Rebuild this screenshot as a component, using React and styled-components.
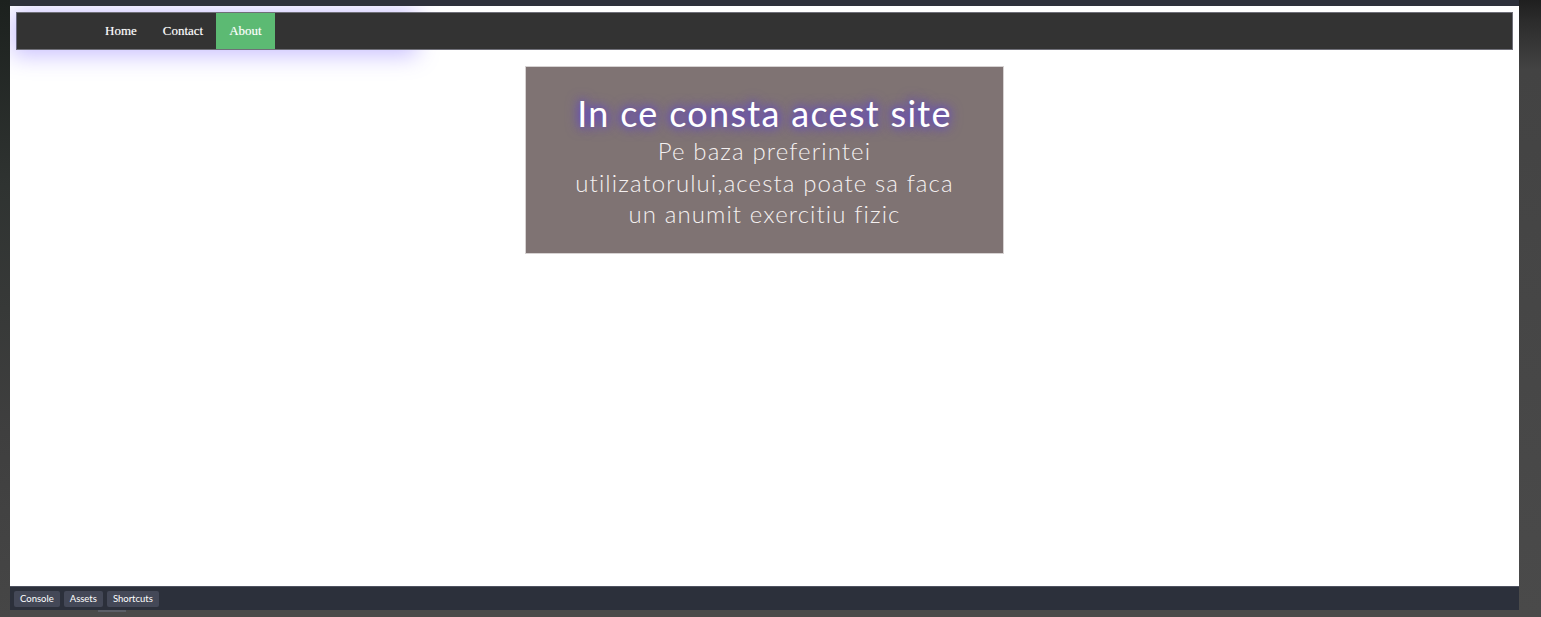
import React from 'react';
import styled, { createGlobalStyle } from 'styled-components';

const GlobalStyle = createGlobalStyle`
  html, body {
    margin: 0;
    padding: 0;
    background: #4a4a4a;
    overflow: hidden;
  }
`;

const Screen = styled.div`
  width: 1541px;
  height: 617px;
  display: grid;
  grid-template-columns: 10px 1509px 22px;
  grid-template-rows: 6px 580px 24px 7px;
  background: #4a4a4a;
`;

const LeftEdge = styled.div`
  grid-column: 1;
  grid-row: 1 / 5;
  background: linear-gradient(180deg, #1c211e 0%, #2f3331 30%, #3f3f3f 70%, #464646 100%);
`;

const RightEdge = styled.div`
  grid-column: 3;
  grid-row: 1 / 5;
  background: linear-gradient(180deg, #1f1f1f 0%, #2b2b2b 20px, #434343 70px, #4a4a4a 100%);
`;

const TopBar = styled.div`
  grid-column: 2;
  grid-row: 1;
  background: #2e313b;
`;

const Preview = styled.div`
  grid-column: 2;
  grid-row: 2;
  position: relative;
  z-index: 0;
  background: #ffffff;
  padding: 6px 6px 0;
  overflow: hidden;
`;

/* purple glow behind the left part of the bar */
const Nav = styled.nav`
  position: relative;
  height: 36px;
  background: #333333;
  border: 1px solid #6f6f78;
  border-left-color: #6a6a80;

  &::before {
    content: '';
    position: absolute;
    left: 0;
    top: 0;
    width: 395px;
    height: 36px;
    z-index: -1;
    box-shadow: 0 2px 22px 5px rgba(140, 120, 255, 0.45);
  }
`;

const NavList = styled.ul`
  margin: 0;
  padding: 0 0 0 75px;
  height: 36px;
  list-style: none;
  display: flex;
`;

const NavLink = styled.a`
  display: block;
  height: 36px;
  line-height: 36px;
  padding: 0 13px;
  font-family: "Liberation Serif", "Times New Roman", serif;
  font-size: 13px;
  color: #ffffff;
  text-decoration: none;
  background: ${(p) => (p.$active ? '#5cba73' : 'transparent')};
  text-shadow: 0 0 1px rgba(255, 255, 255, 0.4);
`;

const Content = styled.main`
  display: flex;
  justify-content: center;
  padding-top: 16px;
`;

const Card = styled.section`
  width: 479px;
  height: 188px;
  box-sizing: border-box;
  background: #7f7373;
  border: 1px solid #d6d2d2;
  display: flex;
  flex-direction: column;
  align-items: center;
  padding-top: 24px;
  text-align: center;
  color: #ffffff;
  font-family: "Lato", "Open Sans", sans-serif;
`;

const Title = styled.h1`
  margin: 0;
  font-size: 36px;
  font-weight: 400;
  line-height: 44px;
  letter-spacing: 1.3px;
  text-shadow: 0 0 8px #5b3fc8, 0 0 14px #6a4bd8;
`;

const Text = styled.p`
  margin: 0;
  width: 400px;
  font-size: 24px;
  font-weight: 300;
  line-height: 31.5px;
  color: #f4f0f0;
  letter-spacing: 1.1px;
`;

const BottomBar = styled.div`
  grid-column: 2;
  grid-row: 3;
  background: #2c303b;
  border-top: 1px solid #4e5260;
  display: flex;
  align-items: center;
  gap: 4px;
  padding-left: 4px;
  position: relative;
`;

const ToolButton = styled.button`
  height: 16px;
  padding: 0 6px;
  border: 0;
  border-radius: 2px;
  background: #444857;
  color: #ffffff;
  font-family: "Lato", "Liberation Sans", sans-serif;
  font-size: 9.5px;
  line-height: 16px;
`;

const Handle = styled.div`
  position: absolute;
  left: 88px;
  bottom: -2px;
  width: 28px;
  height: 2px;
  background: #5c5f68;
`;

const Footer = styled.div`
  grid-column: 2;
  grid-row: 4;
  background: #4a4a4a;
`;

const links = [
  { label: 'Home' },
  { label: 'Contact' },
  { label: 'About', active: true },
];

export default function App() {
  return (
    <>
      <GlobalStyle />
      <Screen>
        <LeftEdge />
        <TopBar />
        <Preview>
          <Nav>
            <NavList>
              {links.map((l) => (
                <li key={l.label}>
                  <NavLink href="#" $active={l.active}>
                    {l.label}
                  </NavLink>
                </li>
              ))}
            </NavList>
          </Nav>
          <Content>
            <Card>
              <Title>In ce consta acest site</Title>
              <Text>
                Pe baza preferintei utilizatorului,acesta poate sa faca un anumit exercitiu fizic
              </Text>
            </Card>
          </Content>
        </Preview>
        <RightEdge />
        <BottomBar>
          <ToolButton>Console</ToolButton>
          <ToolButton>Assets</ToolButton>
          <ToolButton>Shortcuts</ToolButton>
          <Handle />
        </BottomBar>
        <Footer />
      </Screen>
    </>
  );
}
